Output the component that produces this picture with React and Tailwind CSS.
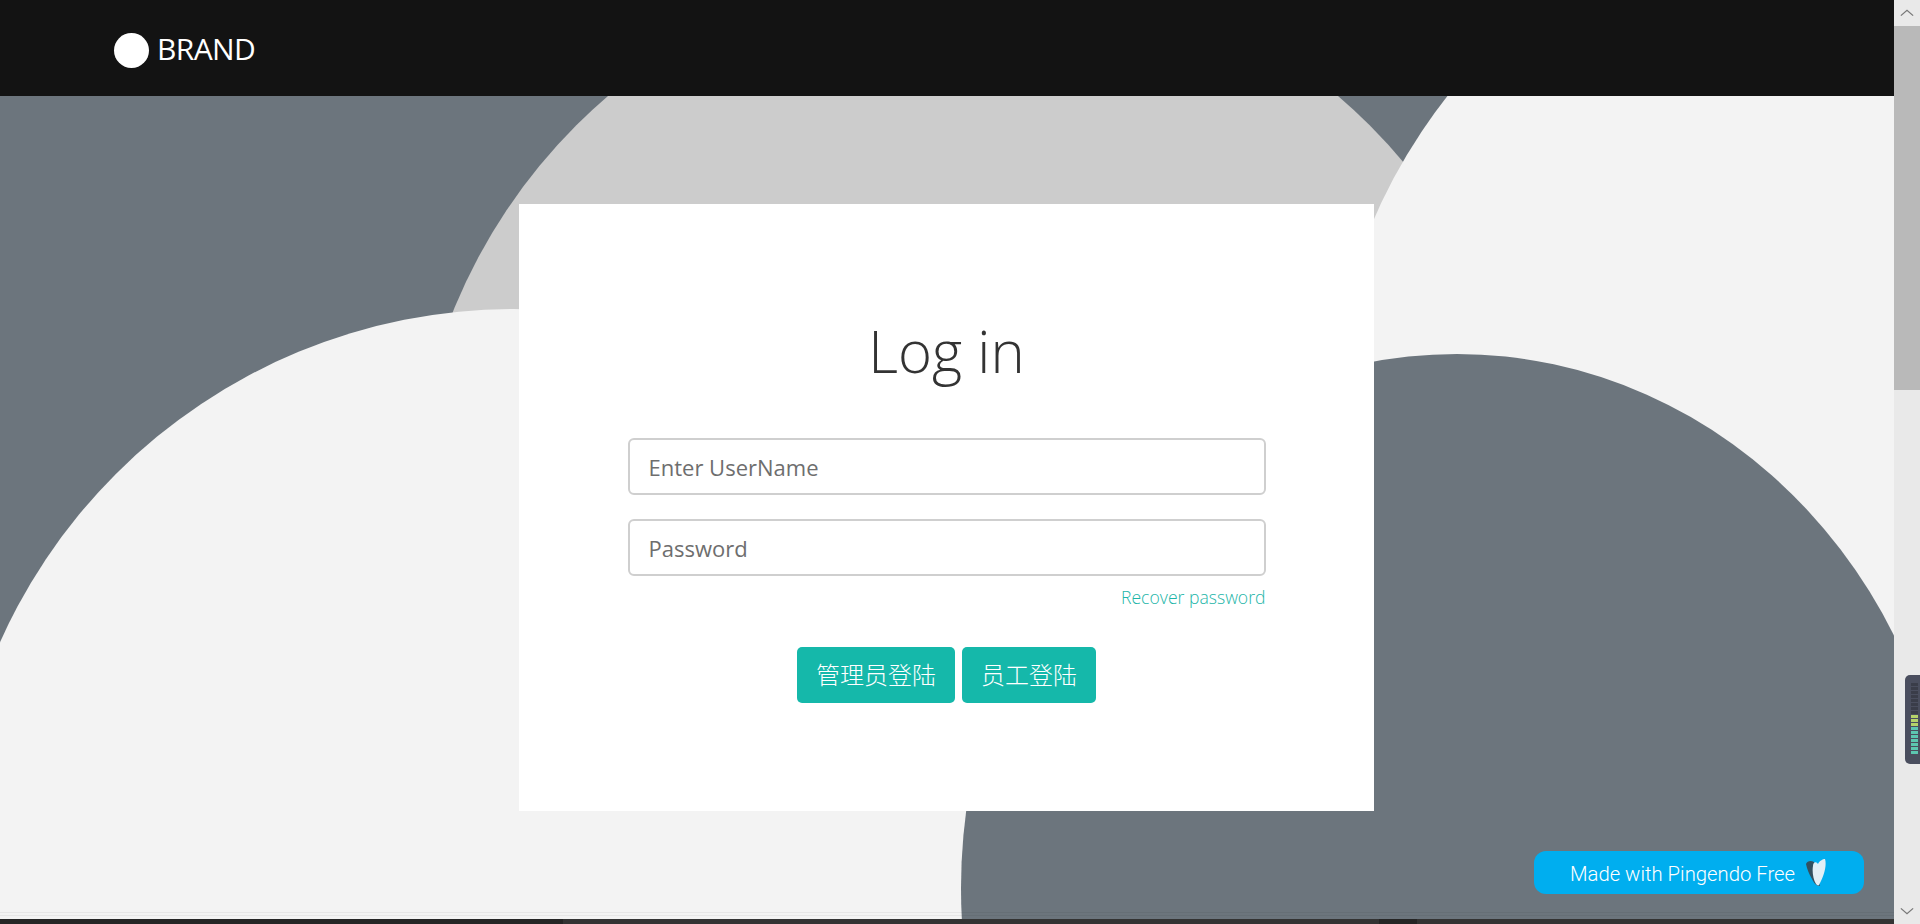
export default function App() {
  return (
    <div className="h-[924px] w-[1920px] overflow-hidden flex bg-[#e9e9e9] font-['Open_Sans','Noto_Sans_CJK_SC',sans-serif]">
      <div className="w-[1894px] h-full flex flex-col">
        <nav className="h-24 bg-[#131313] flex items-center pl-[114px] pt-[5px] shrink-0">
          <div className="w-[35px] h-[35px] rounded-full bg-white" />
          <span className="ml-[8px] -mt-[4px] text-[30px] text-white leading-none tracking-[-0.6px]">BRAND</span>
        </nav>
        <main className="relative h-[823px] bg-[#6c757d] overflow-hidden flex justify-center pt-[108px] pr-[2px] shrink-0">
          <div className="absolute left-[412px] top-[-135px] w-[1122px] h-[1122px] rounded-full bg-[#cccccc]" />
          <div className="absolute left-[1327px] top-[-215px] w-[1126px] h-[1126px] rounded-full bg-[#f3f3f3]" />
          <div className="absolute left-[-49px] top-[213px] w-[1126px] h-[1126px] rounded-full bg-[#f3f3f3]" />
          <div className="absolute left-[961px] top-[258px] w-[992px] h-[1068px] rounded-[50%] bg-[#6c757d]" />
          <div className="absolute z-10 left-0 right-0 bottom-[6px] h-px bg-black/5" />
          <div className="absolute z-10 left-0 right-0 bottom-[3px] h-px bg-black/5" />
          <section className="relative z-10 w-[855px] h-[607px] bg-white flex flex-col pl-[109px] pr-[108px] pt-[113px]">
            <h1 className="text-center text-[58px] font-light text-[#333333] leading-[67px]">Log in</h1>
            <input placeholder="Enter UserName" className="mt-[54px] h-[57px] w-full rounded-[6px] border-2 border-[#cfcfcf] pl-[19px] pr-5 text-[22px] placeholder:text-[#6e6e6e] outline-none" />
            <input placeholder="Password" className="mt-6 h-[57px] w-full rounded-[6px] border-2 border-[#cfcfcf] pl-[19px] pr-5 text-[22px] placeholder:text-[#6e6e6e] outline-none" />
            <a className="mt-[9px] text-right text-[17.6px] leading-6 font-light text-[#1cb5a8]">Recover password</a>
            <div className="mt-[38px] flex justify-center gap-[7px]">
              <button className="h-14 px-[19px] rounded-[5px] bg-[#15b8aa] text-white text-[24px] font-light">管理员登陆</button>
              <button className="h-14 px-[19px] rounded-[5px] bg-[#15b8aa] text-white text-[24px] font-light">员工登陆</button>
            </div>
          </section>
          <a className="absolute z-20 left-[1534px] top-[755px] w-[330px] h-[43px] rounded-[12px] bg-[#00aeef] text-white font-['Roboto',sans-serif] font-light text-[20.3px] flex items-center pl-9 pt-[3px]">
            Made with Pingendo Free
            <svg viewBox="0 0 20 27" className="ml-[11px] -mt-[3px] w-5 h-[27px]">
              <path d="M0 5C1 2 5 1 8 3l6 24c-4 0-6-3-8-7C3 15 1 10 0 5z" fill="#33505f" />
              <path d="M7 7c0-4 3-5 5-2 1-3 5-5 7-5 2 6-1 17-6 26-1 1-2 0-3-1C7 20 6 12 7 7z" fill="#e2eff6" />
            </svg>
          </a>
        </main>
        <div className="h-[5px] bg-[#252525] flex shrink-0">
          <div className="ml-[563px] w-[816px] bg-[#333333]" />
          <div className="ml-[38px] w-[477px] bg-[#333333]" />
        </div>
      </div>
      <aside className="relative w-[26px] h-full bg-[#e9e9e9]">
        <svg viewBox="0 0 16 8" className="absolute left-[6px] top-[9px] w-[14px] h-[8px]"><path d="M1 7l7-6 7 6" fill="none" stroke="#777" strokeWidth="1.5" /></svg>
        <div className="absolute left-0 top-[26px] w-full h-[364px] bg-[#b9b9b9]" />
        <svg viewBox="0 0 16 8" className="absolute left-[6px] top-[907px] w-[14px] h-[8px]"><path d="M1 1l7 6 7-6" fill="none" stroke="#777" strokeWidth="1.5" /></svg>
        <div className="absolute left-[11px] top-[675px] w-[15px] h-[89px] rounded-l-[5px] bg-[#4a4e5e] flex flex-col gap-[1px] items-center pt-2 pl-1">
          {Array.from({ length: 18 }).map((_, i) => (
            <div key={i} className={i < 8 ? "w-[7px] h-[3px] bg-[#3a3d49]" : i < 11 ? "w-[7px] h-[3px] bg-[#b5d36a]" : "w-[7px] h-[3px] bg-[#5cc6b0]"} />
          ))}
        </div>
      </aside>
    </div>
  );
}
